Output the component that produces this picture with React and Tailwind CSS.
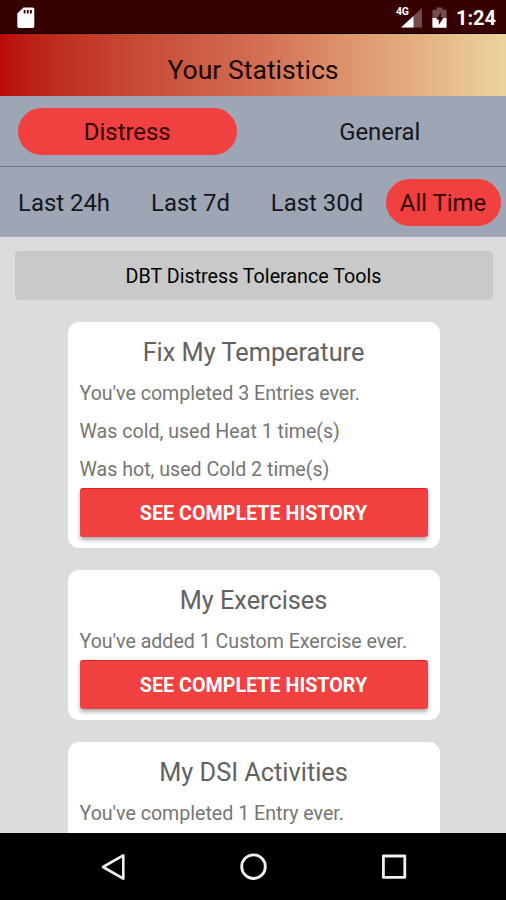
import { useState } from 'react';
import clsx from 'clsx';

const tabs = [
  { id: 'distress', label: 'Distress' },
  { id: 'general', label: 'General' },
];

const ranges = [
  { id: '24h', label: 'Last 24h', width: 'w-[126px]' },
  { id: '7d', label: 'Last 7d', width: 'w-[127px]' },
  { id: '30d', label: 'Last 30d', width: 'w-[126px]' },
  { id: 'all', label: 'All Time', width: 'w-[126px]' },
];

const cards = [
  {
    title: 'Fix My Temperature',
    lines: [
      "You've completed 3 Entries ever.",
      'Was cold, used Heat 1 time(s)',
      'Was hot, used Cold 2 time(s)',
    ],
    history: true,
  },
  { title: 'My Exercises', lines: ["You've added 1 Custom Exercise ever."], history: true },
  { title: 'My DSI Activities', lines: ["You've completed 1 Entry ever."], history: false },
];

function StatusBar() {
  return (
    <div className="flex h-[34px] shrink-0 items-center border-b border-black bg-[#360000] pr-[10px] pl-[17px] text-white">
      <svg width="18" height="22" viewBox="0 0 18 22" className="mt-[2px]">
        <path d="M6.5 0.5H15.5Q17.3 0.5 17.3 2.3V19.2Q17.3 21 15.5 21H2Q0.3 21 0.3 19.2V6.5Z" fill="#fff" />
        <path d="M6.7 3h1.8v3.6h-1.8zM9.9 3h1.8v3.6h-1.8zM13 3h1.8v3.6h-1.8z" fill="#360000" />
      </svg>
      <div className="ml-auto flex items-center">
        <div className="relative mt-[2px] h-[22px] w-[27px]">
          <svg width="27" height="22" viewBox="0 0 27 22">
            <path d="M26 1V20.5H5Z" fill="#fff" opacity="0.3" />
            <path d="M17.5 9V20.5H5Z" fill="#fff" />
            <path d="M0 0H13.5V10.2H0Z" fill="#360000" />
          </svg>
          <span className="absolute top-[-2px] left-0 text-[10.5px] leading-[14px] font-bold tracking-[-0.3px]">4G</span>
        </div>
        <svg width="15" height="22" viewBox="0 0 15 22" className="mt-[2px] ml-[9px]">
          <path d="M4.5 0.4H10.5V2.7H13.5Q14.6 2.7 14.6 3.8V11H0.4V3.8Q0.4 2.7 1.5 2.7H4.5Z" fill="#fff" opacity="0.3" />
          <path d="M0.4 11H14.6V19.7Q14.6 20.7 13.6 20.7H1.4Q0.4 20.7 0.4 19.7Z" fill="#fff" />
          <path d="M9 5.5L4 12.6H6.8V18L11.6 10.6H9Z" fill="#360000" />
        </svg>
        <span className="mt-[3px] ml-[9px] text-[20px] leading-none font-bold">1:24</span>
      </div>
    </div>
  );
}

function StatCard({ title, lines, history }) {
  return (
    <section className="mb-[22px] w-[372px] shrink-0 rounded-[11px] bg-white px-[12px] pt-[12px] pb-[11px]">
      <h2 className="h-[40px] text-center text-[25.3px] leading-[37px] text-[#616161]">{title}</h2>
      {lines.map((line) => (
        <p key={line} className="h-[38px] text-[19.6px] leading-[39px] whitespace-nowrap text-[#757575]">
          {line}
        </p>
      ))}
      {history && (
        <button
          type="button"
          className="block h-[49px] w-full rounded-[3px] border-t border-[#e02020] bg-[#f04040] pt-[2px] text-[19.7px] font-bold text-white shadow-[0_3px_4px_rgba(0,0,0,0.32)]"
        >
          SEE COMPLETE HISTORY
        </button>
      )}
    </section>
  );
}

function NavBar() {
  return (
    <nav className="flex h-[67px] shrink-0 items-center justify-between bg-black pr-[98px] pl-[100px]">
      <svg width="27" height="30" viewBox="0 0 27 30" fill="none" stroke="#f0f0f0" strokeWidth="2.6" strokeLinejoin="round">
        <path d="M23.3 3.3V26.7L3 15Z" />
      </svg>
      <svg width="30" height="30" viewBox="0 0 30 30" fill="none" stroke="#f0f0f0" strokeWidth="2.8">
        <circle cx="14.5" cy="14.7" r="11.8" />
      </svg>
      <svg width="28" height="30" viewBox="0 0 28 30" fill="none" stroke="#f0f0f0" strokeWidth="2.8" strokeLinejoin="round">
        <rect x="3.4" y="4" width="21.4" height="21.4" />
      </svg>
    </nav>
  );
}

export default function App() {
  const [tab, setTab] = useState('distress');
  const [range, setRange] = useState('all');

  return (
    <div className="flex h-[900px] w-[506px] flex-col overflow-hidden bg-[#dcdcdc] font-['Roboto',sans-serif]">
      <StatusBar />
      <header className="flex h-[62px] shrink-0 items-center justify-center bg-linear-to-r from-[#b80808] via-[#d26c52] to-[#ebd49c] pt-[10px]">
        <h1 className="text-[26.6px] leading-none text-[#170605]">Your Statistics</h1>
      </header>

      <div className="flex h-[71px] shrink-0 items-center border-b border-[#6d7482] bg-[#9ea5b5] pl-px">
        {tabs.map((t) => (
          <div key={t.id} className="flex w-[253px] justify-center">
            <button
              type="button"
              onClick={() => setTab(t.id)}
              className={clsx(
                'h-[47px] w-[219px] rounded-full pt-[4px] text-[23.9px]',
                tab === t.id ? 'bg-[#f04040] text-[#330508]' : 'text-[#15171c]'
              )}
            >
              {t.label}
            </button>
          </div>
        ))}
      </div>

      <div className="flex h-[70px] shrink-0 items-center bg-[#9ea5b5] pl-px">
        {ranges.map((r) => (
          <div key={r.id} className={clsx('flex justify-center', r.width)}>
            <button
              type="button"
              onClick={() => setRange(r.id)}
              className={clsx(
                'h-[47px] w-[115px] rounded-full pt-[4px] text-[23.9px] whitespace-nowrap',
                range === r.id ? 'bg-[#f04040] text-[#330508]' : 'text-[#15171c]'
              )}
            >
              {r.label}
            </button>
          </div>
        ))}
      </div>

      <main className="flex min-h-0 flex-1 flex-col items-center overflow-hidden pt-[14px] pl-px">
        <div className="mb-[22px] flex h-[49px] w-[478px] shrink-0 items-center justify-center rounded-[4px] bg-[#c9c9c9] pt-[2px] text-[19.7px] text-black">
          DBT Distress Tolerance Tools
        </div>
        {cards.map((card) => (
          <StatCard key={card.title} {...card} />
        ))}
      </main>
      <NavBar />
    </div>
  );
}
